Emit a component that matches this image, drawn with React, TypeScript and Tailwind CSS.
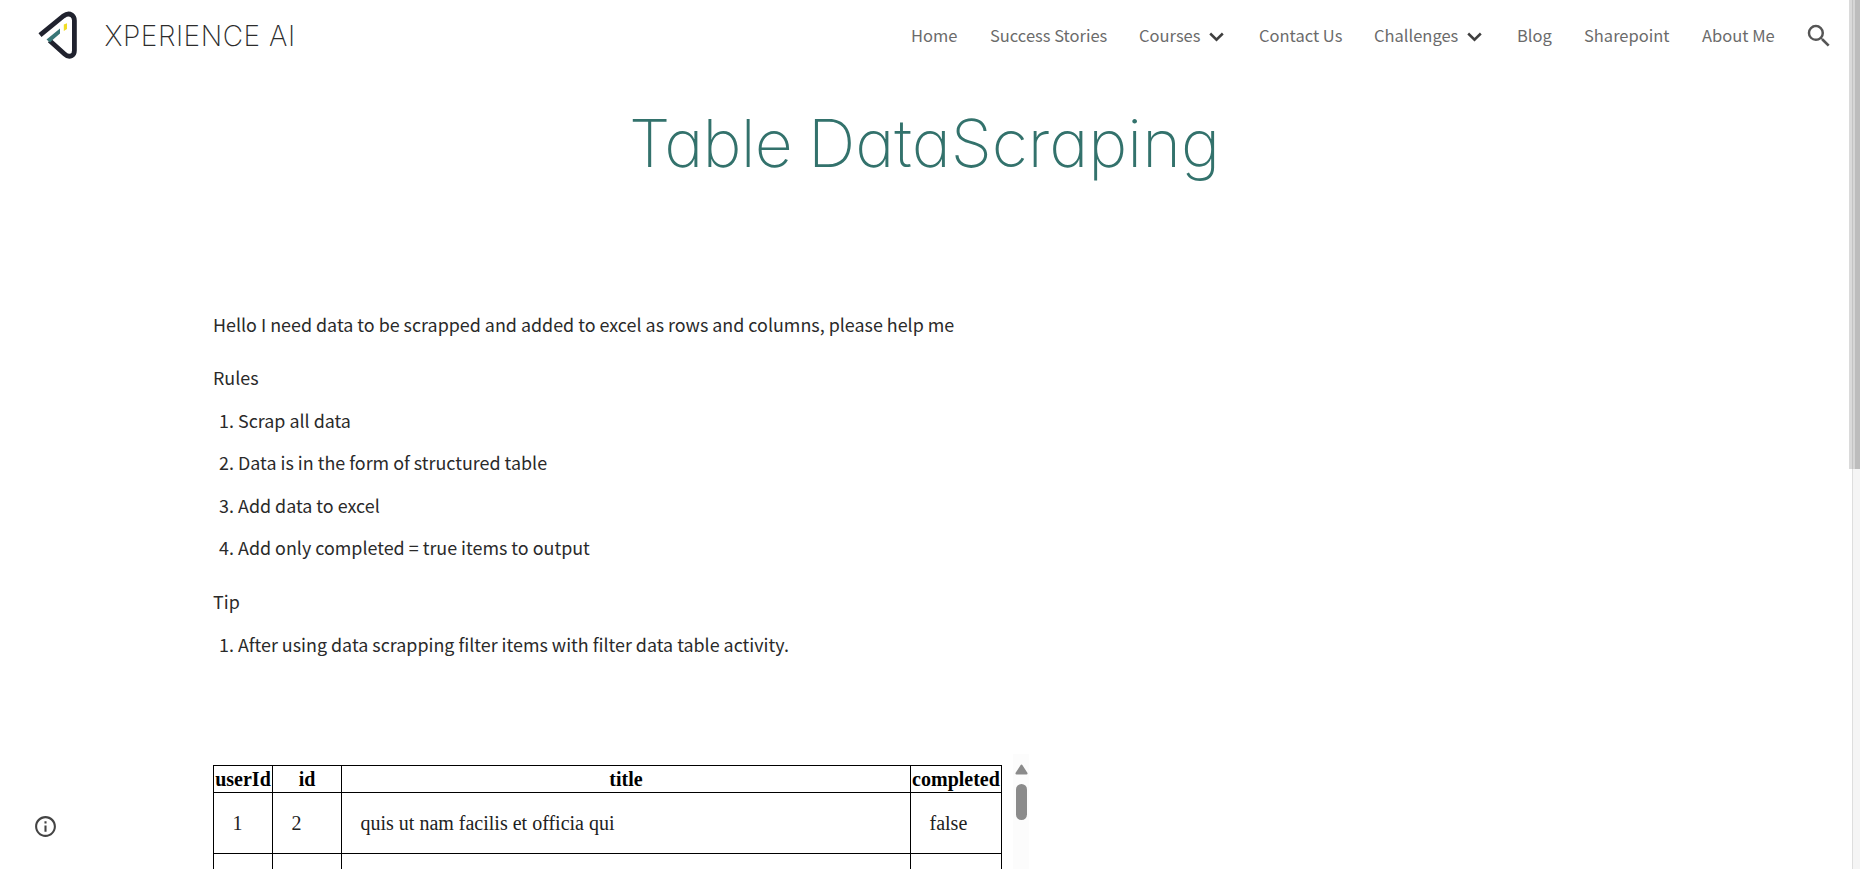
import React from "react";

const sans = "font-['Noto_Sans_CJK_SC',sans-serif]";

type NavEntry = { label: string; width: string; menu?: boolean };

const nav: NavEntry[] = [
  { label: "Home", width: "w-[79px]" },
  { label: "Success Stories", width: "w-[149px]" },
  { label: "Courses", width: "w-[120px]", menu: true },
  { label: "Contact Us", width: "w-[115px]" },
  { label: "Challenges", width: "w-[143px]", menu: true },
  { label: "Blog", width: "w-[67px]" },
  { label: "Sharepoint", width: "w-[118px]" },
  { label: "About Me", width: "w-[102px]" },
];

const rows = [
  ["1", "2", "quis ut nam facilis et officia qui", "false"],
  ["", "", "", ""],
];

function Logo() {
  return (
    <svg width="42" height="50" viewBox="37 10 42 50" fill="none">
      <path d="M40 35.200 L63.500 16 Q68 12.600 71.800 15 Q74.400 16.800 74.400 20.500 V50.500 Q74.400 54.500 71.500 55.800 Q68 57.300 64.500 54 L49.500 40.500" stroke="#20222e" strokeWidth="4.800" />
      <path d="M46.500 39.500 L60 28.500 V33.500 L52.500 40 L50 42.500 Z" fill="#397778" />
      <path d="M63.800 24.600 L67 23.200 V29 L63.800 31 Z" fill="#f1dd25" />
    </svg>
  );
}

function Chevron() {
  return (
    <svg className="ml-[9px] mt-[2px]" width="15" height="10" viewBox="0 0 15 10" fill="none" stroke="#3f3f3f" strokeWidth="2.5">
      <path d="M1.200 1.500 L7.500 7.700 L13.800 1.500" />
    </svg>
  );
}

function Rules({ items }: { items: string[] }) {
  return (
    <ol className="flex flex-col">
      {items.map((t, i) => (
        <li key={t} className="flex h-[42.5px] items-center pt-[2px]">
          <span className="w-[25px] pl-[6px]">{i + 1}.</span>
          <span>{t}</span>
        </li>
      ))}
    </ol>
  );
}

export default function App() {
  return (
    <div className={`relative flex h-[869px] w-[1860px] overflow-hidden bg-white ${sans}`}>
      <div className="flex w-[1849px] flex-col">
        <header className="flex h-[71px] items-center">
          <div className="ml-[37px] flex w-[67.5px] items-center pb-[2px]">
            <Logo />
          </div>
          <div className="whitespace-nowrap font-['Inter'] text-[28px] font-extralight tracking-[0.55px] text-[#2c2c2c]">XPERIENCE AI</div>
          <nav className="ml-auto flex items-center text-[16.5px] text-[#6b6b6b]">
            {nav.map((n) => (
              <a key={n.label} className={`flex items-center whitespace-nowrap ${n.width}`}>
                {n.label}
                {n.menu && <Chevron />}
              </a>
            ))}
          </nav>
          <svg className="mr-[15px]" width="30" height="30" viewBox="0 0 24 24" fill="#555">
            <path d="M15.500 14h-.79l-.28-.27A6.470 6.470 0 0 0 16 9.500 6.500 6.500 0 1 0 9.500 16c1.610 0 3.090-.59 4.230-1.570l.27.28v.79l5 4.990L20.490 19l-4.990-5zm-6 0C7.010 14 5 11.990 5 9.500S7.010 5 9.500 5 14 7.010 14 9.500 11.990 14 9.500 14z" />
          </svg>
        </header>
        <h1 className="flex h-[145px] items-center whitespace-pre pl-[629px] font-['Inter'] text-[66px] font-extralight text-[#33726c] [font-feature-settings:'cv11']">
          <span className="w-[179px] tracking-[-0.8px]">Table</span>
          <span>DataScraping</span>
        </h1>
        <main className="flex flex-col pl-[213px] text-[17.9px] text-[#2a2a2a]">
          <p className="mt-[87px] flex h-[42px] items-center">Hello I need data to be scrapped and added to excel as rows and columns, please help me</p>
          <p className="mt-[11px] flex h-[42px] items-center">Rules</p>
          <Rules items={["Scrap all data", "Data is in the form of structured table", "Add data to excel", "Add only completed = true items to output"]} />
          <p className="mt-[12px] flex h-[42px] items-center">Tip</p>
          <Rules items={["After using data scrapping filter items with filter data table activity."]} />
          <div className="mt-[89px] flex h-[115px]">
            <div className="mt-[11px] w-[789px] font-['Liberation_Serif'] text-[20px] leading-[22px]">
              <table className="w-[789px] table-fixed border-collapse text-black">
                <colgroup>
                  <col className="w-[59px]" />
                  <col className="w-[69px]" />
                  <col className="w-[569px]" />
                  <col className="w-[91px]" />
                </colgroup>
                <thead>
                  <tr className="h-[27px]">
                    {["userId", "id", "title", "completed"].map((h) => (
                      <th key={h} className="border border-black p-0 font-bold">{h}</th>
                    ))}
                  </tr>
                </thead>
                <tbody>
                  {rows.map((r, k) => (
                    <tr key={k} className="h-[61px]">
                      {r.map((c, i) => (
                        <td key={i} className="border border-black px-[18.5px] py-0 text-[#212121]">{c}</td>
                      ))}
                    </tr>
                  ))}
                </tbody>
              </table>
            </div>
            <div className="ml-[11px] flex w-[16px] flex-col items-center bg-[#fcfcfc]">
              <svg className="mt-[10px]" width="13" height="11" viewBox="0 0 13 11" fill="#8b8b8b">
                <path d="M6.500 0.500 Q7.100 0.500 7.500 1.200 L12.500 9 Q12.800 10.500 11.500 10.500 H1.500 Q0.200 10.500 0.500 9 L5.500 1.200 Q5.900 0.500 6.500 0.500Z" />
              </svg>
              <div className="mt-[9px] h-[36px] w-[11px] rounded-full bg-[#8b8b8b]" />
            </div>
          </div>
        </main>
      </div>
      <div className="flex h-full w-[11px] flex-col">
        <div className="flex h-[469px]">
          <div className="w-[3px] bg-[#dadada]" />
          <div className="w-[1px] bg-[#c4c4c4]" />
          <div className="w-[2px] bg-[#d6d6d6]" />
          <div className="w-[5px] bg-[#bdbdbd]" />
        </div>
        <div className="flex flex-1 pl-[3px]">
          <div className="w-[1px] bg-[#dedede]" />
          <div className="w-[7px] bg-[#f5f5f5]" />
        </div>
      </div>
      <svg className="absolute left-[33px] top-[814px]" width="25" height="25" viewBox="0 0 24 24" fill="#444">
        <path d="M11 17h2v-6h-2v6zm1-15C6.480 2 2 6.480 2 12s4.480 10 10 10 10-4.480 10-10S17.520 2 12 2zm0 18c-4.410 0-8-3.590-8-8s3.590-8 8-8 8 3.590 8 8-3.590 8-8 8zM11 9h2V7h-2v2z" />
      </svg>
    </div>
  );
}
